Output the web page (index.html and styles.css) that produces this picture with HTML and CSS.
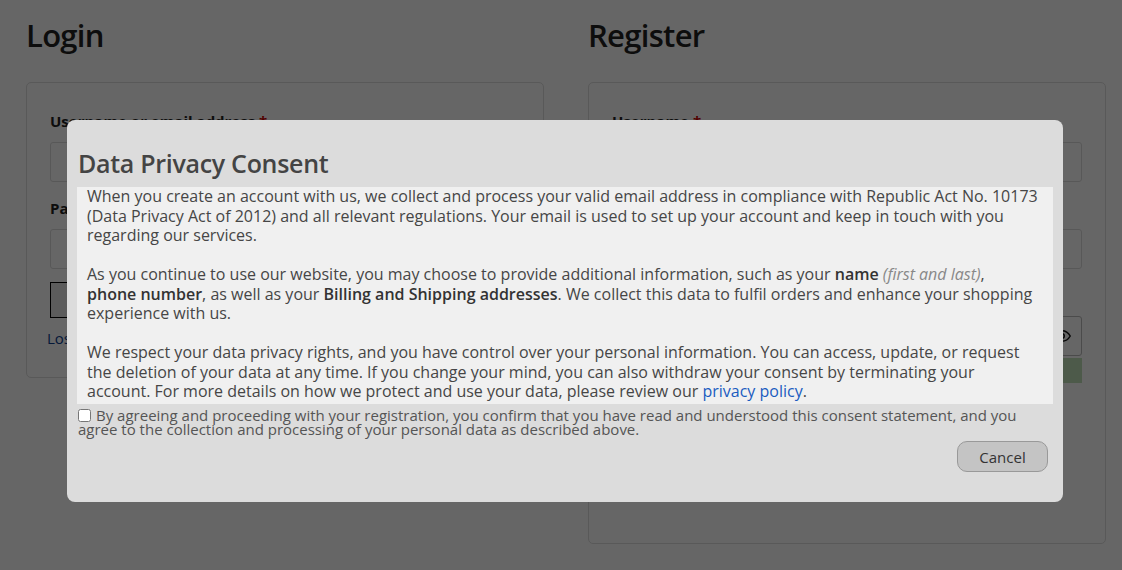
FILE: index.html
```html
<!DOCTYPE html>
<html lang="en">
<head>
<meta charset="utf-8">
<title>My Account</title>
<link rel="stylesheet" href="styles.css">
</head>
<body>
<div class="page">
  <section class="col">
    <h2 class="col-title">Login</h2>
    <form class="card">
      <div class="row">
        <label class="lbl">Username or email address <span class="req">*</span></label>
        <div class="input"></div>
      </div>
      <div class="row">
        <label class="lbl">Password <span class="req">*</span></label>
        <div class="input"></div>
      </div>
      <div class="btn-login">Log in</div>
      <a class="lost">Lost your password?</a>
    </form>
  </section>
  <section class="col">
    <h2 class="col-title">Register</h2>
    <form class="card card-reg">
      <div class="row">
        <label class="lbl">Username <span class="req">*</span></label>
        <div class="input"></div>
      </div>
      <div class="row">
        <label class="lbl">Email address <span class="req">*</span></label>
        <div class="input"></div>
      </div>
      <div class="row row-tight">
        <label class="lbl">Password <span class="req">*</span></label>
        <div class="input input-focus">
          <svg class="eye" width="18" height="18" viewBox="0 0 24 24" fill="none" stroke="#111" stroke-width="2" stroke-linecap="round" stroke-linejoin="round"><path d="M1 12s4-7 11-7 11 7 11 7-4 7-11 7S1 12 1 12z"/><circle cx="12" cy="12" r="3"/></svg>
        </div>
        <div class="meter">Strong</div>
      </div>
    </form>
  </section>
</div>

<div class="overlay"></div>

<div class="modal">
  <h3 class="modal-title">Data Privacy Consent</h3>
  <div class="modal-body">
    <p>When you create an account with us, we collect and process your valid email address in compliance with Republic Act No. 10173 (Data Privacy Act of 2012) and all relevant regulations. Your email is used to set up your account and keep in touch with you regarding our services.</p>
    <p>As you continue to use our website, you may choose to provide additional information, such as your <b>name</b> <i>(first and last)</i>, <b>phone number</b>, as well as your <b>Billing and Shipping addresses</b>. We collect this data to fulfil orders and enhance your shopping experience with us.</p>
    <p>We respect your data privacy rights, and you have control over your personal information. You can access, update, or request the deletion of your data at any time. If you change your mind, you can also withdraw your consent by terminating your account.&nbsp;For more details on how we protect and use your data, please review our <a class="policy">privacy policy</a>.</p>
  </div>
  <label class="consent"><input type="checkbox" class="cb">By agreeing and proceeding with your registration, you confirm that you have read and understood this consent statement, and you agree to the collection and processing of your personal data as described above.</label>
  <div class="actions">
    <button class="cancel" type="button">Cancel</button>
  </div>
</div>
</body>
</html>
```
FILE: styles.css
```css
* { box-sizing: border-box; }

html, body {
  margin: 0;
  padding: 0;
  background: #ffffff;
  font-family: "Open Sans", "DejaVu Sans", sans-serif;
  color: #333;
}

.page {
  display: flex;
  gap: 44px;
  padding: 0 17px 0 26px;
}

.col {
  width: 518px;
  flex: none;
}

.col-title {
  margin: 14px 0 26px;
  font-size: 31px;
  line-height: 42px;
  font-weight: 600;
  color: #222;
  letter-spacing: -0.7px;
}

.card {
  border: 1px solid #dedede;
  border-radius: 5px;
  padding: 27px 23px 28px;
  display: flex;
  flex-direction: column;
}

.card-reg {
  height: 462px;
}

.row {
  display: flex;
  flex-direction: column;
  margin-bottom: 15px;
}

.lbl {
  font-size: 15px;
  line-height: 22px;
  font-weight: 700;
  color: #222;
  margin-bottom: 10px;
}

.req { color: #c00; }

.input {
  height: 40px;
  border: 1px solid #ddd;
  border-radius: 3px;
  background: #fff;
  display: flex;
  align-items: center;
  justify-content: flex-end;
  padding-right: 10px;
}

.input-focus { border-color: #bbb; }

.eye { display: block; }

.meter {
  margin-top: 2px;
  height: 25px;
  background: #c1e1b9;
  font-size: 13px;
  line-height: 25px;
  text-align: center;
  color: #333;
}

.btn-login {
  align-self: flex-start;
  height: 36px;
  width: 90px;
  border: 1px solid #000;
  background: #e6e6e6;
  font-size: 15px;
  line-height: 34px;
  text-align: center;
  margin-top: -2px;
}

.lost {
  margin: 9px 0 0 -3px;
  font-size: 15px;
  line-height: 22px;
  color: #0a3d8f;
}

.overlay {
  position: fixed;
  inset: 0;
  background: rgba(0, 0, 0, 0.6);
}

.modal {
  position: absolute;
  left: 67px;
  top: 120px;
  width: 996px;
  height: 382px;
  background: #dcdcdc;
  border-radius: 8px;
  padding: 0 10px;
}

.modal-title {
  margin: 27px 0 0 1px;
  height: 40px;
  font-size: 25px;
  line-height: 32px;
  font-weight: 600;
  color: #444;
  letter-spacing: -0.3px;
}

.modal-body {
  height: 217px;
  overflow: hidden;
  background: #f0f0f0;
  padding: 0 10px 0 10px;
  font-size: 16px;
  line-height: 19.5px;
  color: #464646;
}

.modal-body p {
  margin: 0 0 19.5px;
}

.modal-body b {
  font-weight: 600;
  color: #333;
  white-space: nowrap;
}

.modal-body i {
  color: #888;
}

.policy {
  color: #1a5cc0;
}

.consent {
  display: block;
  margin-top: 4px;
  padding-left: 1px;
  font-size: 15px;
  line-height: 14px;
  color: #555;
}

.cb {
  width: 13px;
  height: 13px;
  margin: 0 5px 0 0;
  vertical-align: -1px;
}

.actions {
  display: flex;
  justify-content: flex-end;
  padding-right: 5px;
  margin-top: 5px;
}

.cancel {
  width: 91px;
  height: 31px;
  border: 1px solid #999;
  border-radius: 10px;
  background: #c4c4c4;
  font-family: inherit;
  font-size: 15px;
  color: #333;
  padding: 0;
}
```
